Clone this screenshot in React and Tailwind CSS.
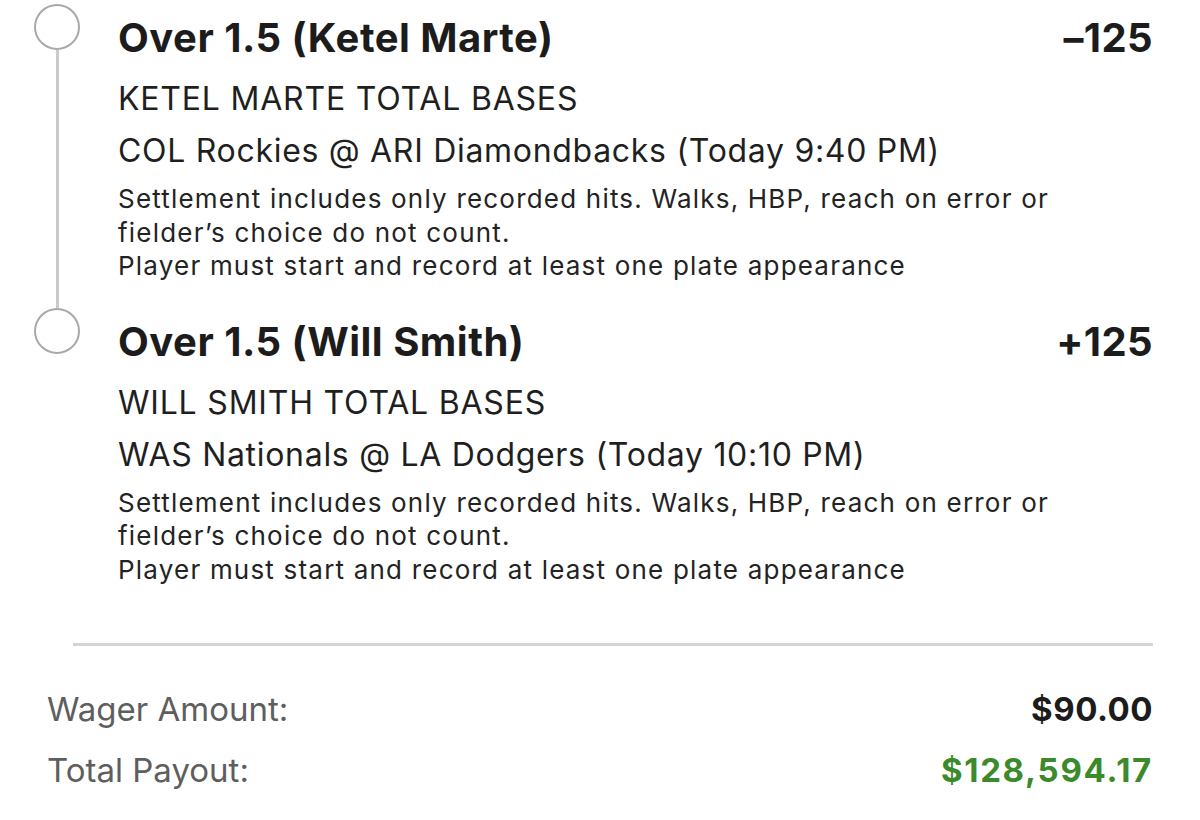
const legs = [
  {
    id: 1,
    title: "Over 1.5 (Ketel Marte)",
    odds: "–125",
    market: "KETEL MARTE TOTAL BASES",
    game: "COL Rockies @ ARI Diamondbacks (Today 9:40 PM)",
  },
  {
    id: 2,
    title: "Over 1.5 (Will Smith)",
    odds: "+125",
    market: "WILL SMITH TOTAL BASES",
    game: "WAS Nationals @ LA Dodgers (Today 10:10 PM)",
  },
];

function Leg({ leg, last }) {
  return (
    <div className="flex items-stretch">
      {/* timeline marker + connector */}
      <div className="flex w-[46px] shrink-0 flex-col items-center">
        <div className="h-[46px] w-[46px] shrink-0 rounded-full border-2 border-[#a9a9a9] bg-white" />
        {!last && <div className="w-[3px] flex-1 bg-[#cacaca]" />}
      </div>

      <div className={`ml-[38px] flex-1 pt-[10px] ${last ? "" : "pb-[25px]"}`}>
        <div className="flex items-center justify-between">
          <h2 className="text-[40px] leading-[48px] font-bold tracking-[0.5px] text-[#1c1c1c]">{leg.title}</h2>
          <span className="text-[40px] leading-[48px] font-bold tracking-[0.4px] text-[#1c1c1c]">{leg.odds}</span>
        </div>
        <p className="mt-[17px] text-[32px] leading-[40px] tracking-[0.8px] text-[#1f1f1f]">{leg.market}</p>
        <p className="mt-[12px] text-[32px] leading-[40px] tracking-[0.7px] text-[#1f1f1f]">{leg.game}</p>
        <div className="mt-[11px] text-[26px] leading-[33.5px] tracking-[1.2px] text-[#232323]">
          <p>Settlement includes only recorded hits. Walks, HBP, reach on error or</p>
          <p>fielder’s choice do not count.</p>
          <p>Player must start and record at least one plate appearance</p>
        </div>
      </div>
    </div>
  );
}

export default function App() {
  return (
    <div className="h-[820px] w-[1200px] overflow-hidden bg-white pt-[4px] pr-[47px] pl-[34px] font-['Inter','Noto_Sans',sans-serif]">
      {legs.map((leg, i) => (
        <Leg key={leg.id} leg={leg} last={i === legs.length - 1} />
      ))}

      <div className="mt-[57px] ml-[39px] h-[3px] bg-[#d4d4d4]" />

      <div className="mt-[43px] pl-[13px] text-[33px] leading-[40px]">
        <div className="flex items-center justify-between">
          <span className="text-[#5e5e5e]">Wager Amount:</span>
          <span className="font-bold tracking-[0.5px] text-[#1c1c1c]">$90.00</span>
        </div>
        <div className="mt-[21px] flex items-center justify-between">
          <span className="text-[#5e5e5e]">Total Payout:</span>
          <span className="font-bold tracking-[1.7px] text-[#3b8a2c]">$128,594.17</span>
        </div>
      </div>
    </div>
  );
}
